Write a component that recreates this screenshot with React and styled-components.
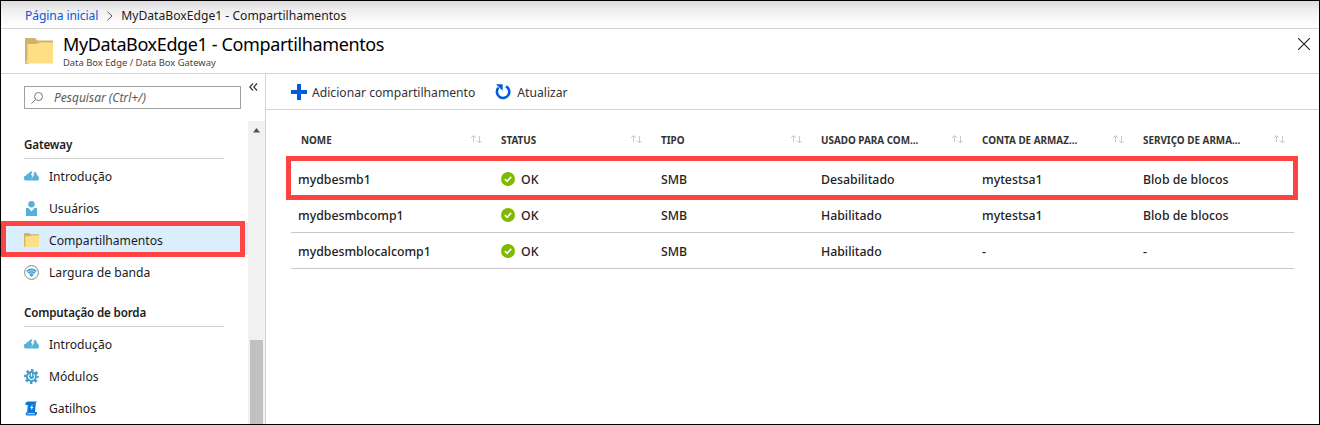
import React from "react";
import styled, { createGlobalStyle, css } from "styled-components";

const Global = createGlobalStyle`
  *, *::before, *::after { box-sizing: border-box; }
  body { margin: 0; background: #fff; }
  svg { display: block; flex: none; }
`;

const Window = styled.div`
  position: relative;
  display: flex;
  flex-direction: column;
  width: 1320px;
  height: 425px;
  border: 1px solid #000;
  overflow: hidden;
  background: #fff;
  color: #1b1b1b;
  font-family: "Noto Sans", "Open Sans", sans-serif;
  font-size: 12.15px;
  line-height: 16px;
  white-space: nowrap;
`;

const Breadcrumb = styled.nav`
  display: flex;
  align-items: center;
  height: 28px;
  padding: 2px 24px 0;
  border-bottom: 1px solid #d3d3d3;
  background: linear-gradient(#dcdadc, #f0eff0 35%, #fbfbfb 75%, #fff);
`;

const CrumbLink = styled.a`
  color: #0b57d8;
  letter-spacing: -0.12px;
`;

const CrumbChevron = styled.svg`
  margin: 0 8px 0 9px;
`;

const Header = styled.header`
  display: flex;
  height: 45px;
  padding: 5px 9px 0 24px;
  border-bottom: 1px solid #d3d3d3;
`;

const HeaderIcon = styled.div`
  padding-top: 4px;
`;

const CloseButton = styled.div`
  padding-top: 4px;
`;

const Titles = styled.div`
  flex: 1;
  padding-left: 10px;
`;

const Title = styled.h1`
  margin: 0;
  font-size: 18px;
  font-weight: 400;
  line-height: 21px;
  letter-spacing: -0.37px;
  color: #000;
`;

const Subtitle = styled.div`
  font-size: 9.4px;
  line-height: 14px;
  color: #444;
  padding-top: 1px;
`;

const Body = styled.div`
  display: flex;
  flex: 1;
  min-height: 0;
`;

const Sidebar = styled.aside`
  display: flex;
  flex-direction: column;
  width: 265px;
  border-right: 1px solid #d3d3d3;
`;

const SearchRow = styled.div`
  display: flex;
  height: 47px;
  padding: 12px 0 0 23px;
`;

const SearchBox = styled.div`
  display: flex;
  align-items: center;
  gap: 11px;
  width: 217px;
  height: 23px;
  padding: 1px 0 0 6px;
  border: 1px solid #a0a0a0;
  color: #5a5a5a;
  font-size: 12px;
  font-style: italic;
`;

const Collapse = styled.svg`
  margin: -3px 0 0 8px;
`;

const NavArea = styled.div`
  display: flex;
  flex: 1;
  min-height: 0;
`;

const NavList = styled.div`
  flex: 1;
  overflow: hidden;
`;

const NavHeading = styled.h2`
  display: flex;
  align-items: flex-end;
  height: ${(p) => (p.$first ? 38 : 40)}px;
  margin: 0 24px 0 23px;
  padding-bottom: 5px;
  border-bottom: 1px solid #d0d0d0;
  font-size: 11.6px;
  font-weight: 600;
  letter-spacing: -0.15px;
`;

const NavItem = styled.div`
  position: relative;
  display: flex;
  align-items: center;
  gap: 10px;
  height: 32px;
  padding: 2px 0 0 23px;
  background: ${(p) => (p.$selected ? "#daeefe" : "transparent")};
`;

const ItemLabel = styled.span`
  padding-top: 2px;
`;

const outline = css`
  content: "";
  position: absolute;
  border: 5px solid #ff4343;
  pointer-events: none;
`;

const SelectedNavItem = styled(NavItem)`
  &::after {
    ${outline}
    inset: -2px 3px -2px 0;
  }
`;

const Scrollbar = styled.div`
  display: flex;
  flex-direction: column;
  align-items: center;
  width: 17px;
  padding-top: 7px;
  background: #f1f1f1;
`;

const ScrollThumb = styled.div`
  flex: 1;
  width: 13px;
  margin-top: 207px;
  background: #c1c1c1;
`;

const Main = styled.main`
  flex: 1;
`;

const Toolbar = styled.div`
  display: flex;
  align-items: center;
  gap: 20px;
  height: 36px;
  padding-left: 25px;
  border-bottom: 1px solid #d3d3d3;
`;

const ToolButton = styled.div`
  display: flex;
  align-items: center;
  gap: ${(p) => p.$gap || 5}px;
  color: #333;
`;

const Table = styled.div`
  margin: 12px 0 0 25px;
  width: 1003px;
`;

const columns = css`
  display: grid;
  grid-template-columns: 200px 160px 160px 161px 161px 161px;
  align-items: center;
`;

const TableHead = styled.div`
  ${columns}
  height: 39px;
  padding-bottom: 2px;
  border-bottom: 1px solid #c8c8c8;
`;

const HeadCell = styled.div`
  display: flex;
  align-items: center;
  justify-content: space-between;
  padding: 0 9px 0 10px;
  font-size: 9.9px;
  font-weight: 700;
  color: #333;
`;

const SortArrows = styled.svg`
  margin-bottom: 2px;
`;

const TableRow = styled.div`
  ${columns}
  position: relative;
  height: 36px;
  border-bottom: 1px solid #c8c8c8;
`;

const OutlinedRow = styled(TableRow)`
  &::after {
    ${outline}
    inset: -5px -4px -4px -5px;
  }
`;

const Cell = styled.div`
  display: flex;
  align-items: center;
  gap: 6px;
  padding-left: ${(p) => (p.$first ? 7 : 10)}px;
  font-size: 12.3px;
  font-weight: 500;
  color: #222;
`;

const FolderIcon = ({ w, h }) => (
  <svg width={w} height={h} viewBox="0 0 28 26" preserveAspectRatio="none">
    <path d="M0 0h10l2.500 2.500H28v5H0z" fill="#cfb46e" />
    <path d="M0 0h4v26H0z" fill="#cfb46e" />
    <path d="M2.500 6 12 6l2-1.500h14V25.500H2.500l-2-.5 2-2.500z" fill="#ffdf86" />
  </svg>
);

const CloudIcon = () => (
  <svg width="15" height="10" viewBox="0 0 15 10">
    <path d="M2.600 9.500A2.500 2.500 0 0 1 2.200 4.400 2.600 2.600 0 0 1 4.600 2.600C5.500.800 7 .100 8.400.200L7 4.300h1.600L7.200 8l3.400-4.800H9L10.600.700c1.400.500 2.300 1.800 2.400 3.400 1.200 1 2 2.400 2 3.700 0 1-.600 1.700-1.500 1.700z" fill="#56b1da" />
  </svg>
);

const UserIcon = () => (
  <svg width="15" height="15" viewBox="0 0 15 15">
    <circle cx="7.500" cy="3.200" r="3.200" fill="#56b1da" />
    <path d="M2 7h2.500L7.500 10.500 10.500 7H13v8H2z" fill="#56b1da" />
  </svg>
);

const BandwidthIcon = () => (
  <svg width="15" height="15" viewBox="0 0 15 15">
    <circle cx="7.500" cy="7.500" r="6.900" fill="#fff" stroke="#858585" />
    <path d="M2.200 5.800Q7.500 1.400 12.800 5.800L7.500 12z" fill="#389fd2" />
    <path d="M3.500 7.200q4-3 8 0M5 8.900q2.500-1.800 5 0" fill="none" stroke="#fff" strokeWidth=".7" />
  </svg>
);

const GearIcon = () => (
  <svg width="15" height="15" viewBox="0 0 15 15">
    <circle cx="7.500" cy="7.500" r="6.300" fill="none" stroke="#3b98c8" strokeWidth="2.200" strokeDasharray="2.500 2.448" strokeDashoffset="1.250" />
    <circle cx="7.500" cy="7.500" r="5.400" fill="#3b98c8" />
    <path d="M5.400 5.400a3 3 0 1 0 4.200 0M7.500 4v3.500" fill="none" stroke="#fff" strokeWidth="1.300" />
  </svg>
);

const TriggerIcon = () => (
  <svg width="15" height="15" viewBox="0 0 15 15">
    <path d="M3.500.5H13.200C12 1.200 11.800 2 11.700 3L11 11.100H13V13l-1.500 1.500H2.800C1.500 14 1.300 12 2.500 11.200h.6L3.800 4H1.500C1 2.300 2 .7 3.500.5z" fill="#0a78d4" />
    <path d="M3.300 12.700h7.500" stroke="#fff" strokeWidth=".8" />
    <path d="M8.600 3.500 6 6.900h1.500L6.900 9.200l2.600-3.300H8.200z" fill="#fff" />
  </svg>
);

const SortIcon = () => (
  <SortArrows width="11" height="9" viewBox="0 0 11 9" fill="none" stroke="#c8c8c8">
    <path d="M2.500 7V.5M0 3 2.500.5 5 3M8.500 1v7M6 5.500 8.500 8 11 5.500" />
  </SortArrows>
);

const OkIcon = () => (
  <svg width="14" height="14" viewBox="0 0 14 14">
    <circle cx="7" cy="7" r="7" fill="#7fba00" />
    <path d="M3.800 7.200 6.100 9.400 10.200 4.900" fill="none" stroke="#fff" strokeWidth="1.600" />
  </svg>
);

const PlusIcon = () => (
  <svg width="16" height="16" viewBox="0 0 16 16">
    <path d="M8 0v16M0 8h16" stroke="#015cda" strokeWidth="4" />
  </svg>
);

const RefreshIcon = () => (
  <svg width="16" height="16" viewBox="0 0 16 16">
    <path d="M11 2.300A6.200 6.200 0 1 1 3.500 3.600" fill="none" stroke="#015cda" strokeWidth="2.600" />
    <path d="M1 .2h6.600v6.600z" fill="#015cda" />
  </svg>
);

const GATEWAY = [
  ["Introdução", CloudIcon],
  ["Usuários", UserIcon],
  ["Compartilhamentos", () => <FolderIcon w={15} h={14} />, true],
  ["Largura de banda", BandwidthIcon],
];
const EDGE = [
  ["Introdução", CloudIcon],
  ["Módulos", GearIcon],
  ["Gatilhos", TriggerIcon],
];
const HEADERS = ["NOME", "STATUS", "TIPO", "USADO PARA COM...", "CONTA DE ARMAZ...", "SERVIÇO DE ARMA..."];
const ROWS = [
  ["mydbesmb1", "OK", "SMB", "Desabilitado", "mytestsa1", "Blob de blocos"],
  ["mydbesmbcomp1", "OK", "SMB", "Habilitado", "mytestsa1", "Blob de blocos"],
  ["mydbesmblocalcomp1", "OK", "SMB", "Habilitado", "-", "-"],
];

const renderItem = ([label, Icon, selected], i) => {
  const Item = selected ? SelectedNavItem : NavItem;
  return (
    <Item key={i} $selected={selected}>
      <Icon />
      <ItemLabel>{label}</ItemLabel>
    </Item>
  );
};

export default function App() {
  return (
    <Window>
      <Global />
      <Breadcrumb>
        <CrumbLink>Página inicial</CrumbLink>
        <CrumbChevron width="6" height="10" viewBox="0 0 6 10" fill="none" stroke="#555">
          <path d="M.5.800 5 5 .5 9.200" />
        </CrumbChevron>
        <span>MyDataBoxEdge1 - Compartilhamentos</span>
      </Breadcrumb>
      <Header>
        <HeaderIcon>
          <FolderIcon w={28} h={26} />
        </HeaderIcon>
        <Titles>
          <Title>MyDataBoxEdge1 - Compartilhamentos</Title>
          <Subtitle>Data Box Edge / Data Box Gateway</Subtitle>
        </Titles>
        <CloseButton>
          <svg width="12" height="12" viewBox="0 0 12 12" stroke="#222" strokeWidth="1.100">
            <path d="M0 0l12 12M12 0L0 12" />
          </svg>
        </CloseButton>
      </Header>
      <Body>
        <Sidebar>
          <SearchRow>
            <SearchBox>
              <svg width="12" height="12" viewBox="0 0 12 12" fill="none" stroke="#777">
                <circle cx="7.500" cy="4.500" r="4" />
                <path d="M4.600 7.400.500 11.500" />
              </svg>
              <span>Pesquisar (Ctrl+/)</span>
            </SearchBox>
            <Collapse width="9" height="8" viewBox="0 0 9 8" fill="none" stroke="#333" strokeWidth="1.200">
              <path d="M4 .5.800 4 4 7.500M8 .5 4.800 4 8 7.500" />
            </Collapse>
          </SearchRow>
          <NavArea>
            <NavList>
              <NavHeading $first>Gateway</NavHeading>
              {GATEWAY.map(renderItem)}
              <NavHeading>Computação de borda</NavHeading>
              {EDGE.map(renderItem)}
            </NavList>
            <Scrollbar>
              <svg width="7" height="5" viewBox="0 0 7 5">
                <path d="M3.500 0 7 4.500H0z" fill="#505050" />
              </svg>
              <ScrollThumb />
            </Scrollbar>
          </NavArea>
        </Sidebar>
        <Main>
          <Toolbar>
            <ToolButton>
              <PlusIcon />
              <ItemLabel>Adicionar compartilhamento</ItemLabel>
            </ToolButton>
            <ToolButton $gap={6}>
              <RefreshIcon />
              <ItemLabel>Atualizar</ItemLabel>
            </ToolButton>
          </Toolbar>
          <Table>
            <TableHead>
              {HEADERS.map((h) => (
                <HeadCell key={h}>
                  <span>{h}</span>
                  <SortIcon />
                </HeadCell>
              ))}
            </TableHead>
            {ROWS.map((row, r) => {
              const Row = r === 0 ? OutlinedRow : TableRow;
              return (
                <Row key={r}>
                  {row.map((value, c) => (
                    <Cell key={c} $first={c === 0}>
                      {c === 1 && <OkIcon />}
                      <ItemLabel>{value}</ItemLabel>
                    </Cell>
                  ))}
                </Row>
              );
            })}
          </Table>
        </Main>
      </Body>
    </Window>
  );
}
